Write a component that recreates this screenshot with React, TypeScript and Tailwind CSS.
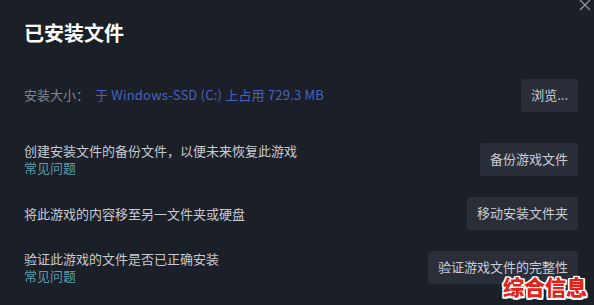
import React from 'react';

const rows = [
  { lines: ['创建安装文件的备份文件，以便未来恢复此游戏'], faq: true, button: '备份游戏文件' },
  { lines: ['将此游戏的内容移至另一文件夹或硬盘'], faq: false, button: '移动安装文件夹' },
  { lines: ['验证此游戏的文件是否已正确安装'], faq: true, button: '验证游戏文件的完整性' },
];

const ActionButton: React.FC<{ label: string }> = ({ label }) => (
  <button className="h-[33px] px-[10px] rounded-[3px] bg-[#2a2e39] text-[13px] text-[#c9cdd4] whitespace-nowrap">
    {label}
  </button>
);

const App: React.FC = () => {
  return (
    <div
      className="relative w-[594px] h-[305px] overflow-hidden bg-[#1b1f28] pl-[24px] pr-[16px] pt-[21px]"
      style={{ fontFamily: '"Noto Sans CJK SC", "Noto Sans", sans-serif' }}
    >
      {/* Close */}
      <svg className="absolute top-[0px] right-[3px]" width="12" height="12" viewBox="0 0 12 12">
        <path d="M1 0L11 10M11 0L1 10" stroke="#8b9099" strokeWidth="1.4" fill="none" />
      </svg>

      <h1 className="text-[20px] leading-[24px] font-bold text-white">已安装文件</h1>

      {/* Install size */}
      <div className="mt-[23px] h-[54px] flex items-center justify-between">
        <div className="flex items-center text-[13px] leading-[16px]">
          <span className="text-[#7f858e]">安装大小：</span>
          <span className="ml-[6px] text-[#4862c2] tracking-[0.2px]">于 Windows-SSD (C:) 上占用 729.3 MB</span>
        </div>
        <button className="h-[33px] px-[10px] rounded-[3px] bg-[#2a2e39] text-[13px] text-[#c9cdd4]">浏览...</button>
      </div>

      <div className="mt-[10px] flex flex-col">
        {rows.map((row, i) => (
          <div key={i} className="h-[54px] flex items-center justify-between">
            <div className="flex flex-col text-[13px] leading-[17px]">
              {row.lines.map((l, j) => (
                <span key={j} className="text-[#c6cad1]">{l}</span>
              ))}
              {row.faq && <span className="text-[#5d9ea8]">常见问题</span>}
            </div>
            <ActionButton label={row.button} />
          </div>
        ))}
      </div>

      {/* Watermark */}
      <div className="absolute left-[503px] top-[273px] text-[21px] leading-[26px] font-black text-[#e2231a] [text-shadow:1.5px_1.5px_0_#fff,-1.5px_-1.5px_0_#fff,1.5px_-1.5px_0_#fff,-1.5px_1.5px_0_#fff,0_1.5px_0_#fff,0_-1.5px_0_#fff,1.5px_0_0_#fff,-1.5px_0_0_#fff]">
        综合信息
      </div>
    </div>
  );
};

export default App;
